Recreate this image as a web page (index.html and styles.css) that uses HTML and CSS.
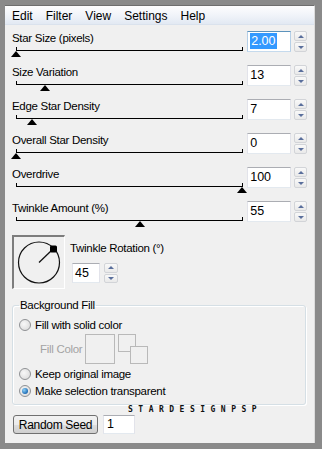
FILE: index.html
```html
<!DOCTYPE html>
<html lang="en">
<head>
<meta charset="UTF-8">
<title>Star Filter</title>
<link rel="stylesheet" href="styles.css">
</head>
<body>
<div class="window">
    <div class="menubar">
        <span>Edit</span><span>Filter</span><span>View</span><span>Settings</span><span>Help</span>
    </div>
    <div class="content">
        <div class="param">
            <div class="param-main">
                <div class="label">Star Size (pixels)</div>
                <div class="slider"><div class="track"></div><div class="thumb" style="left: 0%"></div></div>
            </div>
            <div class="num focused"><span class="sel">2.00</span></div>
            <div class="spin"><div class="up"></div><div class="down"></div></div>
        </div>
        <div class="param">
            <div class="param-main">
                <div class="label">Size Variation</div>
                <div class="slider"><div class="track"></div><div class="thumb" style="left: 13%"></div></div>
            </div>
            <div class="num">13</div>
            <div class="spin"><div class="up"></div><div class="down"></div></div>
        </div>
        <div class="param">
            <div class="param-main">
                <div class="label">Edge Star Density</div>
                <div class="slider"><div class="track"></div><div class="thumb" style="left: 7%"></div></div>
            </div>
            <div class="num">7</div>
            <div class="spin"><div class="up"></div><div class="down"></div></div>
        </div>
        <div class="param">
            <div class="param-main">
                <div class="label">Overall Star Density</div>
                <div class="slider"><div class="track"></div><div class="thumb" style="left: 0%"></div></div>
            </div>
            <div class="num">0</div>
            <div class="spin"><div class="up"></div><div class="down"></div></div>
        </div>
        <div class="param">
            <div class="param-main">
                <div class="label">Overdrive</div>
                <div class="slider"><div class="track"></div><div class="thumb" style="left: 100%"></div></div>
            </div>
            <div class="num">100</div>
            <div class="spin"><div class="up"></div><div class="down"></div></div>
        </div>
        <div class="param">
            <div class="param-main">
                <div class="label">Twinkle Amount (%)</div>
                <div class="slider"><div class="track"></div><div class="thumb" style="left: 55%"></div></div>
            </div>
            <div class="num">55</div>
            <div class="spin"><div class="up"></div><div class="down"></div></div>
        </div>

        <div class="rotation">
            <div class="dial">
                <svg width="50" height="51" viewBox="0 0 50 51">
                    <circle cx="25" cy="25.5" r="20.5" fill="none" stroke="#111" stroke-width="1.2"/>
                    <line x1="25" y1="25.5" x2="38" y2="13" stroke="#111" stroke-width="1.3"/>
                    <rect x="36" y="8.5" width="7" height="7" rx="1.5" fill="#000"/>
                </svg>
            </div>
            <div class="rotation-side">
                <div class="label">Twinkle Rotation (&deg;)</div>
                <div class="rot-input">
                    <div class="num small">45</div>
                    <div class="spin"><div class="up"></div><div class="down"></div></div>
                </div>
            </div>
        </div>

        <fieldset class="group">
            <legend>Background Fill</legend>
            <div class="option first"><span class="radio"></span>Fill with solid color</div>
            <div class="fill-row">
                <span class="fill-label">Fill Color</span>
                <span class="swatch"></span>
                <span class="swap"><span class="sq a"></span><span class="sq b"></span></span>
            </div>
            <div class="option"><span class="radio"></span>Keep original image</div>
            <div class="option"><span class="radio checked"></span>Make selection transparent</div>
        </fieldset>

        <div class="mark">STARDESIGNPSP</div>

        <div class="seed-row">
            <button class="btn">Random Seed</button>
            <div class="num seed">1</div>
        </div>
    </div>
</div>
</body>
</html>
```

FILE: styles.css
```css
body {
    margin: 0;
    padding: 0;
    background-color: #8a8a8a;
    font-family: "Liberation Sans", Arial, sans-serif;
    font-size: 11.5px;
    letter-spacing: -0.3px;
    color: #000;
}
.window {
    margin: 5px 7px 6px 5px;
    height: 438px;
    background-color: #f0f0f0;
    border-top: 1px solid #6e6e6e;
    border-right: 1px solid #dcdcdc;
    box-sizing: border-box;
}
.menubar {
    height: 19px;
    display: flex;
    align-items: center;
    gap: 13px;
    padding: 1px 0 0 7px;
    box-sizing: border-box;
    font-size: 12px;
    letter-spacing: 0;
    background: linear-gradient(to bottom, #fdfdfe 0%, #f1f4f9 50%, #e2e9f3 100%);
    border-bottom: 1px solid #dae2ed;
}
.content {
    padding: 5px 7px 0 7px;
}
.param {
    display: flex;
    height: 34px;
}
.param-main {
    width: 236px;
}
.label {
    height: 14px;
    line-height: 14px;
    padding-top: 1px;
    white-space: nowrap;
}
.slider {
    position: relative;
    margin: 2px 0 0 4px;
    width: 226px;
    height: 10px;
}
.track {
    width: 227px;
    height: 4px;
    border: 1px solid #000;
    border-top: none;
    box-sizing: border-box;
}
.thumb {
    position: absolute;
    top: 4px;
    width: 0;
    height: 0;
    margin-left: -5px;
    border-left: 5px solid transparent;
    border-right: 5px solid transparent;
    border-bottom: 6px solid #000;
}
.num {
    margin-top: 1px;
    width: 44px;
    height: 21px;
    box-sizing: border-box;
    background: #fff;
    border: 1px solid;
    border-color: #abadb3 #e2e3ea #e3e9ef #e2e3ea;
    font-size: 12.5px;
    letter-spacing: 0;
    line-height: 19px;
    padding-left: 2px;
}
.num.focused {
    border-color: #5c93bc #b5cfe7 #c5daed #b5cfe7;
}
.sel {
    display: inline-block;
    background: #3399ff;
    color: #fff;
    line-height: 16px;
    padding: 0 1px;
}
.spin {
    margin: 1px 0 0 3px;
    width: 13px;
    height: 21px;
    display: flex;
    flex-direction: column;
    gap: 1px;
}
.spin div {
    flex: 1;
    display: flex;
    align-items: center;
    justify-content: center;
    border: 1px solid #d2d4d8;
    border-radius: 2px;
    background: linear-gradient(to bottom, #f9f9f9, #e9e9e9);
}
.spin div::after {
    content: "";
    width: 0;
    height: 0;
    border-left: 3px solid transparent;
    border-right: 3px solid transparent;
}
.spin .up::after {
    border-bottom: 3px solid #5a6f9c;
}
.spin .down::after {
    border-top: 3px solid #5a6f9c;
}
.rotation {
    display: flex;
    margin-top: 1px;
}
.dial {
    width: 53px;
    height: 54px;
    box-sizing: border-box;
    border-style: solid;
    border-width: 2px 1px 1px 2px;
    border-color: #7d7d7d #ffffff #ffffff #7d7d7d;
}
.dial svg {
    display: block;
}
.rotation-side {
    margin-left: 5px;
}
.rotation-side .label {
    margin-top: 5px;
}
.rot-input {
    display: flex;
    margin: 8px 0 0 2px;
}
.num.small {
    width: 28px;
    height: 20px;
    margin-top: 0;
}
.rot-input .spin {
    margin: 0 0 0 4px;
    width: 14px;
    height: 20px;
}
.group {
    margin: 9px 1px 0 0;
    padding: 0 0 6px 6px;
    border: 1px solid #d5dfe5;
    border-radius: 3px;
    box-shadow: inset 1px 1px 0 #fff, 1px 1px 0 #fff;
}
.group legend {
    padding: 0 1px;
    line-height: 14px;
}
.option {
    display: flex;
    align-items: center;
    gap: 4px;
    height: 14px;
    line-height: 14px;
    margin-top: 3px;
    white-space: nowrap;
}
.option.first {
    margin-top: 6px;
}
.radio {
    width: 12px;
    height: 12px;
    box-sizing: border-box;
    border-radius: 50%;
    border: 1px solid #8f9194;
    background: radial-gradient(circle at 40% 40%, #f8f8f8, #d6d6d6);
    display: flex;
    align-items: center;
    justify-content: center;
}
.radio.checked::after {
    content: "";
    width: 6px;
    height: 6px;
    border-radius: 50%;
    background: radial-gradient(circle at 35% 35%, #8fd1f7, #1f6db5 70%, #174f8a);
}
.fill-row {
    display: flex;
    align-items: center;
    height: 30px;
    margin-top: 2px;
    padding-left: 21px;
}
.fill-label {
    width: 45px;
    color: #a3a3a3;
    white-space: nowrap;
}
.swatch {
    width: 30px;
    height: 30px;
    box-sizing: border-box;
    border: 1px solid #b9b9b9;
}
.swap {
    position: relative;
    width: 30px;
    height: 30px;
    margin-left: 3px;
}
.sq {
    position: absolute;
    width: 18px;
    height: 18px;
    box-sizing: border-box;
    border: 1px solid #b9b9b9;
}
.sq.a {
    left: 0;
    top: 0;
}
.sq.b {
    left: 12px;
    top: 12px;
    background: #f0f0f0;
}
.mark {
    height: 10px;
    line-height: 10px;
    margin-left: 116px;
    font-family: "DejaVu Sans Mono", monospace;
    font-weight: bold;
    font-size: 8px;
    letter-spacing: 5.5px;
    color: #111;
}
.seed-row {
    display: flex;
    align-items: center;
}
.btn {
    margin-left: 1px;
    width: 85px;
    height: 19px;
    padding: 0;
    border: 1px solid #707070;
    border-radius: 3px;
    background: linear-gradient(to bottom, #f2f2f2 0%, #ebebeb 50%, #dddddd 51%, #cfcfcf 100%);
    font-family: inherit;
    font-size: 12px;
    letter-spacing: -0.3px;
    color: #000;
}
.num.seed {
    margin: 0 0 0 5px;
    width: 32px;
    height: 19px;
    line-height: 17px;
    padding-left: 3px;
}
```
